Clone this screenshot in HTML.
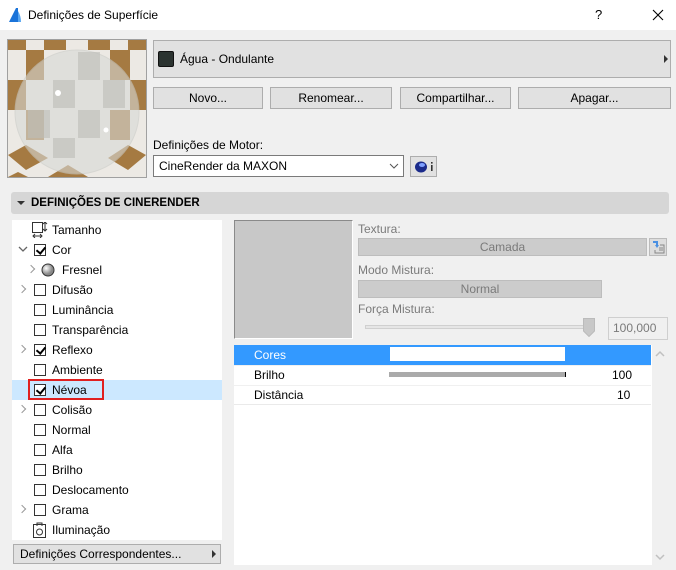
<!DOCTYPE html>
<html><head><meta charset="utf-8">
<style>
*{box-sizing:border-box;margin:0;padding:0}
body{width:676px;height:570px;background:#f0f0f0;font-family:"Liberation Sans",sans-serif;font-size:12px;color:#000;position:relative;overflow:hidden}
.a{position:absolute}
.btn{position:absolute;background:#e1e1e1;border:1px solid #adadad;text-align:center;line-height:20px;font-size:12px}
.row{position:absolute;left:12px;width:210px;height:20px;line-height:20px}
.cb{position:absolute;left:22px;top:4px;width:12px;height:12px;border:1px solid #333;background:#fff}
.cb.c::after{content:"";position:absolute;left:3px;top:0px;width:4px;height:7px;border:solid #000;border-width:0 2px 2px 0;transform:rotate(40deg)}
.lbl{position:absolute;left:40px}
.ch{position:absolute;left:7px;top:6px;width:6px;height:6px;border:solid #999;border-width:1.5px 1.5px 0 0;transform:rotate(45deg)}
.gray{color:#7a7a7a}
</style></head><body>
<div class="a" style="left:0;top:0;width:676px;height:30px;background:#fff"></div>
<svg class="a" style="left:7px;top:7px" width="16" height="16"><rect width="16" height="16" fill="#fff"/><path d="M2 15 L9 1 L11 1 L11 15 Z" fill="#1a73d9"/><path d="M11 4 Q14 9 14 15 L11 15Z" fill="#5aa7f0"/></svg>
<div class="a" style="left:28px;top:8px;font-size:12px">Definições de Superfície</div>
<div class="a" style="left:595px;top:7px;font-size:13px">?</div>
<svg class="a" style="left:652px;top:9px" width="12" height="12"><path d="M1 1L11 11M11 1L1 11" stroke="#000" stroke-width="1.1"/></svg>

<div class="a" style="left:7px;top:39px;width:140px;height:139px;border:1px solid #a0a0a0;background:#fff;overflow:hidden">
<svg width="138" height="137">
<rect width="138" height="137" fill="#ece9e4"/>
<g fill="#a57a42">
<rect x="0" y="0" width="18" height="10"/><rect x="36" y="0" width="22" height="10"/><rect x="80" y="0" width="22" height="10"/><rect x="120" y="0" width="18" height="10"/>
<rect x="18" y="10" width="18" height="30"/><rect x="0" y="40" width="18" height="30"/><rect x="18" y="70" width="18" height="30"/>
<rect x="102" y="10" width="20" height="30"/><rect x="122" y="40" width="16" height="30"/><rect x="102" y="70" width="20" height="30"/>
<path d="M0 115 L18 105 L40 118 L18 130Z"/><path d="M40 137 L60 125 L80 137Z"/><path d="M100 118 L120 105 L138 115 L120 130Z"/><path d="M0 137 L10 132 L20 137Z"/>
</g>
<circle cx="69" cy="72" r="62" fill="#d8dad6" opacity="0.6" stroke="#c9cbc7"/>
<g fill="#bdbdb8" opacity="0.6"><rect x="45" y="40" width="22" height="28"/><rect x="70" y="70" width="22" height="28"/><rect x="20" y="70" width="22" height="28"/><rect x="95" y="40" width="22" height="28"/><rect x="45" y="98" width="22" height="20"/><rect x="70" y="12" width="22" height="28"/></g>
<circle cx="50" cy="53" r="3" fill="#fff"/><circle cx="98" cy="90" r="2.5" fill="#fff"/>
</svg></div>

<div class="a" style="left:153px;top:40px;width:518px;height:38px;background:#e1e1e1;border:1px solid #adadad"></div>
<div class="a" style="left:158px;top:51px;width:16px;height:16px;background:#2b3330;border:1px solid #111;border-radius:2px"></div>
<div class="a" style="left:180px;top:52px;font-size:12px">Água - Ondulante</div>
<div class="a" style="left:664px;top:55px;width:0;height:0;border-left:4px solid #333;border-top:4px solid transparent;border-bottom:4px solid transparent"></div>

<div class="btn" style="left:153px;top:87px;width:110px;height:22px">Novo...</div>
<div class="btn" style="left:270px;top:87px;width:122px;height:22px">Renomear...</div>
<div class="btn" style="left:400px;top:87px;width:111px;height:22px">Compartilhar...</div>
<div class="btn" style="left:518px;top:87px;width:153px;height:22px">Apagar...</div>

<div class="a" style="left:153px;top:138px">Definições de Motor:</div>
<div class="a" style="left:153px;top:155px;width:251px;height:22px;background:#fff;border:1px solid #7a7a7a;line-height:20px;padding-left:5px">CineRender da MAXON</div>
<svg class="a" style="left:389px;top:162px" width="10" height="8"><path d="M1 2L5 6L9 2" fill="none" stroke="#555"/></svg>
<div class="a" style="left:410px;top:156px;width:27px;height:21px;background:#e1e1e1;border:1px solid #adadad"></div>
<svg class="a" style="left:413px;top:159px" width="22" height="15"><ellipse cx="8" cy="8" rx="6" ry="5.5" fill="#1a2a8a"/><ellipse cx="9" cy="6" rx="3" ry="2" fill="#7fa0ff"/><rect x="18" y="3" width="1.6" height="1.6" fill="#333"/><rect x="18" y="6" width="1.6" height="6" fill="#333"/></svg>

<div class="a" style="left:11px;top:192px;width:658px;height:22px;background:#d6d6d6;border-radius:3px"></div>
<div class="a" style="left:17px;top:201px;width:0;height:0;border-top:4px solid #333;border-left:4px solid transparent;border-right:4px solid transparent"></div>
<div class="a" style="left:31px;top:197px;font-weight:bold;font-size:11.5px">DEFINIÇÕES DE CINERENDER</div>

<div class="a" style="left:12px;top:220px;width:210px;height:320px;background:#fff"></div>
<div class="a" style="left:12px;top:380px;width:210px;height:20px;background:#cce8ff"></div>
<div class="row" style="top:220px"><svg class="a" style="left:20px;top:2px" width="16" height="16"><rect x="0.5" y="0.5" width="10" height="10" fill="none" stroke="#333"/><path d="M13 0V9M11 2L13 0L15 2M11 7L13 9L15 7M1 14H10M3 12L1 14L3 16M8 12L10 14L8 16" stroke="#333" fill="none"/></svg><span class="lbl">Tamanho</span></div>
<div class="row" style="top:240px"><svg class="a" style="left:6px;top:6px" width="10" height="8"><path d="M1 1L5 5L9 1" fill="none" stroke="#666" stroke-width="1.3"/></svg><div class="cb c"></div><span class="lbl">Cor</span></div>
<div class="row" style="top:260px"><div class="ch" style="left:16px"></div><svg class="a" style="left:29px;top:3px" width="14" height="14"><defs><radialGradient id="g" cx="0.35" cy="0.35"><stop offset="0" stop-color="#fff"/><stop offset="1" stop-color="#888"/></radialGradient></defs><circle cx="7" cy="7" r="6" fill="url(#g)" stroke="#333"/></svg><span class="lbl" style="left:50px">Fresnel</span></div>
<div class="row" style="top:280px"><div class="ch"></div><div class="cb"></div><span class="lbl">Difusão</span></div>
<div class="row" style="top:300px"><div class="cb"></div><span class="lbl">Luminância</span></div>
<div class="row" style="top:320px"><div class="cb"></div><span class="lbl">Transparência</span></div>
<div class="row" style="top:340px"><div class="ch"></div><div class="cb c"></div><span class="lbl">Reflexo</span></div>
<div class="row" style="top:360px"><div class="cb"></div><span class="lbl">Ambiente</span></div>
<div class="row" style="top:380px"><div class="a" style="left:16px;top:-1px;width:76px;height:21px;border:2px solid #e02020"></div><div class="cb c"></div><span class="lbl">Névoa</span></div>
<div class="row" style="top:400px"><div class="ch"></div><div class="cb"></div><span class="lbl">Colisão</span></div>
<div class="row" style="top:420px"><div class="cb"></div><span class="lbl">Normal</span></div>
<div class="row" style="top:440px"><div class="cb"></div><span class="lbl">Alfa</span></div>
<div class="row" style="top:460px"><div class="cb"></div><span class="lbl">Brilho</span></div>
<div class="row" style="top:480px"><div class="cb"></div><span class="lbl">Deslocamento</span></div>
<div class="row" style="top:500px"><div class="ch"></div><div class="cb"></div><span class="lbl">Grama</span></div>
<div class="row" style="top:520px"><svg class="a" style="left:21px;top:2px" width="14" height="16"><rect x="0.5" y="2.5" width="12" height="13" fill="none" stroke="#333"/><circle cx="6.5" cy="10" r="3" fill="none" stroke="#333"/><path d="M4 4V1H9V4" fill="none" stroke="#333"/></svg><span class="lbl">Iluminação</span></div>

<div class="a" style="left:13px;top:544px;width:208px;height:20px;background:#e1e1e1;border:1px solid #adadad;line-height:18px;padding-left:6px">Definições Correspondentes...</div>
<div class="a" style="left:212px;top:550px;width:0;height:0;border-left:4px solid #333;border-top:4px solid transparent;border-bottom:4px solid transparent"></div>

<div class="a" style="left:234px;top:220px;width:119px;height:119px;background:#c8c8c8;border:1px solid #8a8a8a;border-right-color:#fff;border-bottom-color:#fff"></div>
<div class="a gray" style="left:358px;top:222px">Textura:</div>
<div class="a gray" style="left:358px;top:238px;width:289px;height:18px;background:#cccccc;border:1px solid #bdbdbd;text-align:center;line-height:16px">Camada</div>
<div class="a" style="left:649px;top:238px;width:18px;height:18px;background:#ddd;border:1px solid #bbb"></div>
<svg class="a" style="left:651px;top:240px" width="15" height="15"><path d="M2 2H6V6" fill="none" stroke="#4a90e2" stroke-width="2"/><path d="M4 5L6 8L8 5" fill="#4a90e2"/><path d="M9 5H13V13H4V10" fill="none" stroke="#888"/><path d="M8 8H12M8 10H12" stroke="#888"/></svg>
<div class="a gray" style="left:358px;top:263px">Modo Mistura:</div>
<div class="a gray" style="left:358px;top:280px;width:244px;height:18px;background:#cccccc;border:1px solid #bdbdbd;text-align:center;line-height:16px">Normal</div>
<div class="a gray" style="left:358px;top:302px">Força Mistura:</div>
<div class="a" style="left:365px;top:325px;width:230px;height:4px;background:#e6e6e6;border:1px solid #d0d0d0"></div>
<svg class="a" style="left:583px;top:318px" width="12" height="19"><path d="M0.5 0.5H11.5V13L6 18.5L0.5 13Z" fill="#c8c8c8" stroke="#bbb"/></svg>
<div class="a gray" style="left:608px;top:317px;width:60px;height:23px;background:#f0f0f0;border:1px solid #cfcfcf;line-height:21px;padding-left:4px">100,000</div>

<div class="a" style="left:234px;top:345px;width:418px;height:220px;background:#fff"></div>
<div class="a" style="left:234px;top:345px;width:417px;height:20px;background:#3399ff"></div>
<div class="a" style="left:254px;top:348px;color:#fff">Cores</div>
<div class="a" style="left:390px;top:347px;width:175px;height:14px;background:#fff"></div>
<div class="a" style="left:234px;top:365px;width:417px;height:1px;background:#f0f0f0"></div>
<div class="a" style="left:254px;top:368px">Brilho</div>
<div class="a" style="left:389px;top:372px;width:177px;height:5px;background:#aaa;border-right:1px solid #000"></div>
<div class="a" style="left:612px;top:368px">100</div>
<div class="a" style="left:234px;top:385px;width:417px;height:1px;background:#f0f0f0"></div>
<div class="a" style="left:254px;top:388px">Distância</div>
<div class="a" style="left:617px;top:388px">10</div>
<div class="a" style="left:234px;top:404px;width:417px;height:1px;background:#eaeaea"></div>
<svg class="a" style="left:655px;top:350px" width="10" height="8"><path d="M1 6L5 2L9 6" fill="none" stroke="#c0c0c0" stroke-width="1.5"/></svg>
<svg class="a" style="left:655px;top:553px" width="10" height="8"><path d="M1 2L5 6L9 2" fill="none" stroke="#c0c0c0" stroke-width="1.5"/></svg>
</body></html>
